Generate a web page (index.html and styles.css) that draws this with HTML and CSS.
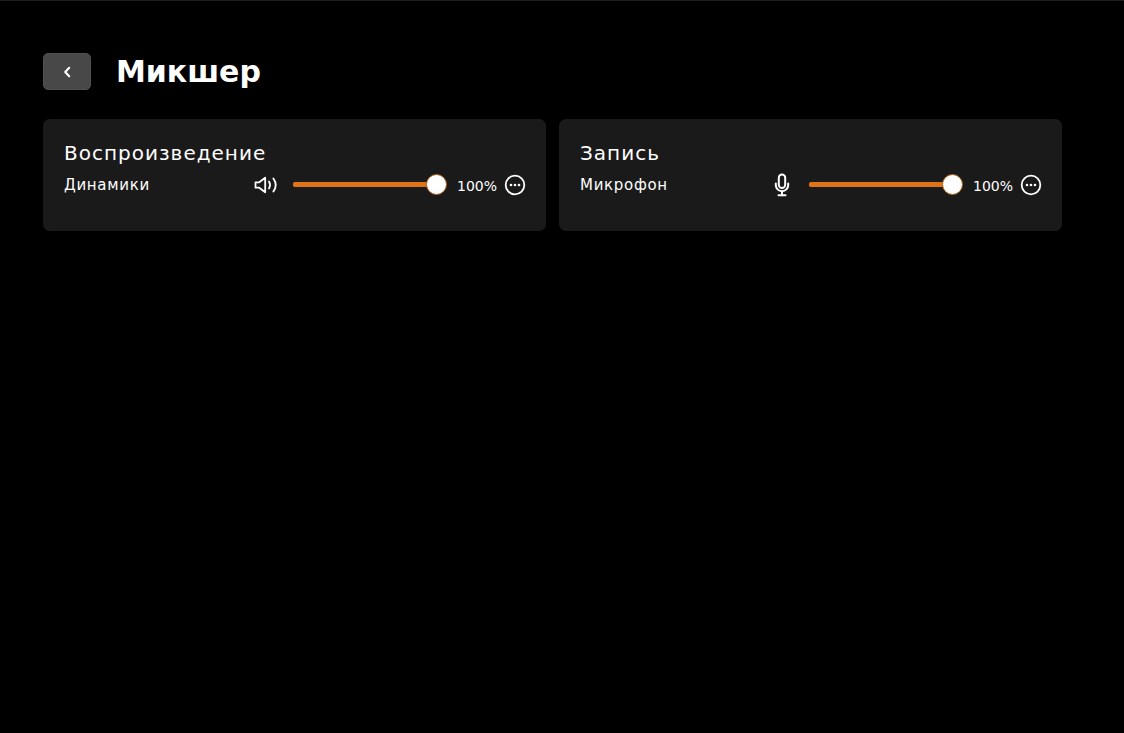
FILE: index.html
```html
<!DOCTYPE html>
<html lang="ru">
<head>
  <meta charset="UTF-8" />
  <title>Микшер</title>
  <link rel="stylesheet" href="styles.css">
</head>
<body>
  <div class="page">
    <header class="page-head">
      <button class="back-btn" type="button" aria-label="Назад">
        <svg width="16" height="16" viewBox="0 0 16 16" fill="none" stroke="#fff" stroke-width="2.2" stroke-linecap="round" stroke-linejoin="round"><path d="M10.200 3.800 6.200 8l4 4.200"/></svg>
      </button>
      <h1>Микшер</h1>
    </header>

    <div class="cards">
      <section class="card">
        <h2>Воспроизведение</h2>
        <div class="device">
          <span class="device-name">Динамики</span>
          <svg class="device-icon" width="24" height="24" viewBox="0 0 24 24" fill="none" stroke="#fff" stroke-width="1.800" stroke-linecap="round" stroke-linejoin="round"><path d="M1.500 9.300v5.400h3.700l6 4.600V4.700l-6 4.600z"/><path d="M15 8.600c1.400 2.200 1.400 4.600 0 6.800"/><path d="M19.400 5.400c2.800 4 2.800 9.200 0 13.200"/></svg>
          <div class="slider"><span class="slider-fill"></span><span class="slider-thumb"></span></div>
          <span class="percent">100%</span>
          <svg class="more" width="22" height="22" viewBox="0 0 22 22" fill="none"><circle cx="11" cy="11" r="9.300" stroke="#fff" stroke-width="1.800"/><circle cx="7" cy="11" r="1.300" fill="#fff"/><circle cx="11" cy="11" r="1.300" fill="#fff"/><circle cx="15" cy="11" r="1.300" fill="#fff"/></svg>
        </div>
      </section>

      <section class="card">
        <h2>Запись</h2>
        <div class="device">
          <span class="device-name">Микрофон</span>
          <svg class="device-icon" width="24" height="24" viewBox="0 0 24 24" fill="none" stroke="#fff" stroke-width="2" stroke-linecap="round" stroke-linejoin="round"><rect x="8.800" y="1.500" width="6.400" height="13.500" rx="3.200"/><path d="M5.800 10.500v1.500a6.200 6.200 0 0 0 12.400 0v-1.500"/><path d="M12 18.200v4"/><path d="M8.500 22.200h7"/></svg>
          <div class="slider"><span class="slider-fill"></span><span class="slider-thumb"></span></div>
          <span class="percent">100%</span>
          <svg class="more" width="22" height="22" viewBox="0 0 22 22" fill="none"><circle cx="11" cy="11" r="9.300" stroke="#fff" stroke-width="1.800"/><circle cx="7" cy="11" r="1.300" fill="#fff"/><circle cx="11" cy="11" r="1.300" fill="#fff"/><circle cx="15" cy="11" r="1.300" fill="#fff"/></svg>
        </div>
      </section>
    </div>
  </div>
</body>
</html>
```

FILE: styles.css
```css
* {
  box-sizing: border-box;
}

html, body {
  height: 100%;
}

body {
  margin: 0;
  background: #000;
  color: #fff;
  font-family: "DejaVu Sans", sans-serif;
  border-top: 1px solid #1c1c1c;
}

.page {
  padding: 52px 62px 0 43px;
}

.page-head {
  display: flex;
  align-items: center;
  gap: 25px;
  height: 37px;
}

.back-btn {
  display: flex;
  align-items: center;
  justify-content: center;
  width: 48px;
  height: 37px;
  padding: 0;
  border: 1px solid #505050;
  border-radius: 5px;
  background: #484848;
}

h1 {
  margin: 0;
  font-size: 30px;
  font-weight: 700;
}

.cards {
  display: grid;
  grid-template-columns: 1fr 1fr;
  gap: 13px;
  margin-top: 29px;
}

.card {
  height: 112px;
  padding: 21px 20px 0 21px;
  border-radius: 7px;
  background: #1a1a1a;
}

h2 {
  margin: 0;
  font-size: 20px;
  line-height: 26px;
  font-weight: 400;
  letter-spacing: 1px;
}

.device {
  display: flex;
  align-items: center;
  height: 24px;
  margin-top: 6px;
}

.device-name {
  flex: 1;
  padding-top: 1px;
  font-size: 15px;
  letter-spacing: 0.7px;
}

.device-icon {
  margin-top: 2px;
  margin-right: 15px;
}

.more {
  margin-top: 2px;
}

.slider {
  position: relative;
  width: 153px;
  height: 5px;
  margin-right: 11px;
  border-radius: 3px;
  background: #df7318;
}

.slider-fill {
  display: block;
  height: 100%;
  border-radius: 3px;
  background: #df7318;
}

.slider-thumb {
  position: absolute;
  top: -8px;
  right: -1px;
  width: 21px;
  height: 21px;
  border: 1.500px solid #a95c14;
  border-radius: 50%;
  background: #fff;
}

.percent {
  width: 40px;
  margin-right: 7px;
  padding-top: 3px;
  font-size: 14px;
  white-space: nowrap;
}
```
